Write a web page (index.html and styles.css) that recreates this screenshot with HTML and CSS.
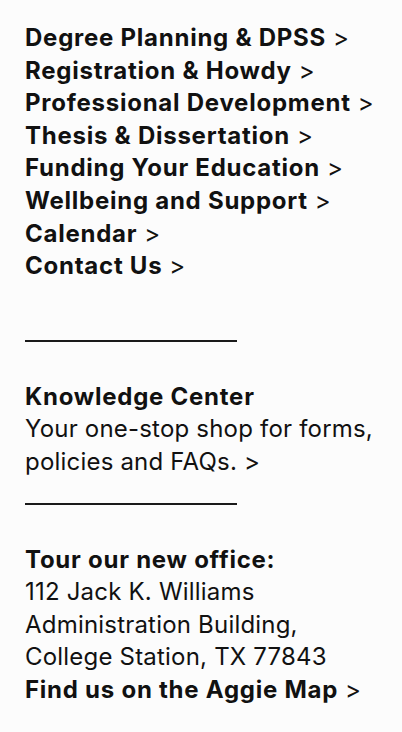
FILE: index.html
```html
<!DOCTYPE html>
<html lang="en">
<head>
<meta charset="utf-8">
<title>Footer links</title>
<link rel="stylesheet" href="styles.css">
</head>
<body>
<div class="footer">
  <nav class="nav">
    <a class="nav-link" href="#"><b>Degree Planning &amp; DPSS</b> &gt;</a>
    <a class="nav-link" href="#"><b>Registration &amp; Howdy</b> &gt;</a>
    <a class="nav-link" href="#"><b>Professional Development</b> &gt;</a>
    <a class="nav-link" href="#"><b>Thesis &amp; Dissertation</b> &gt;</a>
    <a class="nav-link" href="#"><b>Funding Your Education</b> &gt;</a>
    <a class="nav-link" href="#"><b>Wellbeing and Support</b> &gt;</a>
    <a class="nav-link" href="#"><b>Calendar</b> &gt;</a>
    <a class="nav-link" href="#"><b>Contact Us</b> &gt;</a>
  </nav>
  <div class="blank"></div>
  <div class="rule"></div>
  <div class="blank"></div>
  <div class="block">
    <b>Knowledge Center</b><br>
    Your one-stop shop for forms,<br>
    policies and FAQs. &gt;
  </div>
  <div class="rule"></div>
  <div class="blank"></div>
  <div class="block">
    <b>Tour our new office:</b><br>
    112 Jack K. Williams<br>
    Administration Building,<br>
    College Station, TX 77843<br>
    <b>Find us on the Aggie Map</b> &gt;
  </div>
</div>
</body>
</html>
```
FILE: styles.css
```css
html, body {
  margin: 0;
  padding: 0;
  background: #fcfcfc;
}
.footer {
  padding: 22px 25px 0 25px;
  font-family: Inter, "Open Sans", sans-serif;
  font-size: 24px;
  line-height: 32.6px;
  letter-spacing: 0.2px;
  color: #111;
}
.nav {
  display: flex;
  flex-direction: column;
}
.nav-link {
  color: #111;
  text-decoration: none;
}
b {
  font-weight: 700;
  letter-spacing: 0.75px;
}
.blank {
  height: 32.6px;
}
.rule {
  height: 32.6px;
  box-sizing: border-box;
  width: 212px;
  border-bottom: 2px solid #1a1a1a;
  transform: translateY(-6px);
}
.block {
  white-space: nowrap;
}
```
